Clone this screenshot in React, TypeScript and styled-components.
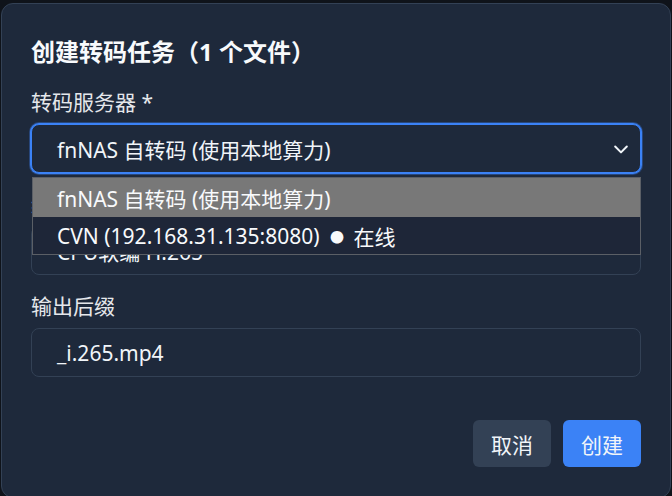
import React from "react";
import styled, { createGlobalStyle } from "styled-components";

const GlobalStyle = createGlobalStyle`
  html, body {
    margin: 0;
    padding: 0;
    background: #0f131a;
  }
  body {
    font-family: "Noto Sans", "Noto Sans CJK SC", sans-serif;
    color: #f1f5f9;
  }
  * { box-sizing: border-box; }
`;

const Dialog = styled.div`
  width: 670px;
  margin: 3px 1px 0 1px;
  padding: 30px 29px 30px 29px;
  background: #1e293b;
  border: 1px solid #334155;
  border-radius: 12px;
  display: flex;
  flex-direction: column;
`;

const Title = styled.h2`
  margin: 0 0 18px 0;
  font-size: 24px;
  line-height: 36px;
  font-weight: 700;
  color: #f8fafc;
  font-family: "Noto Sans", "Noto Sans CJK SC", sans-serif;
`;

const Form = styled.div`
  position: relative;
  display: flex;
  flex-direction: column;
`;

const Field = styled.div`
  display: flex;
  flex-direction: column;
  margin-bottom: 17px;
`;

const Label = styled.label`
  font-size: 21px;
  line-height: 29px;
  margin-bottom: 7px;
  color: #e5e7eb;
`;

const Box = styled.div<{ $focused?: boolean }>`
  height: 49px;
  display: flex;
  align-items: center;
  justify-content: space-between;
  padding: 0 9px 0 25px;
  background: #1e293b;
  border: 1px solid ${(p) => (p.$focused ? "#3b82f6" : "#334155")};
  border-radius: 8px;
  font-size: 21px;
  color: #f1f5f9;
  box-shadow: ${(p) =>
    p.$focused ? "0 0 0 1px #3b82f6, 0 0 0 2px rgba(59,130,246,0.35)" : "none"};
`;

const Chevron = styled.svg`
  width: 20px;
  height: 20px;
  flex: none;
`;

const Menu = styled.div`
  position: absolute;
  top: 89px;
  left: 1px;
  right: 0;
  background: #1e2638;
  border: 1px solid #5b5f66;
  z-index: 10;
  display: flex;
  flex-direction: column;
`;

const Option = styled.div<{ $active?: boolean }>`
  height: ${(p) => (p.$active ? 39 : 37)}px;
  display: flex;
  align-items: center;
  padding-left: 24px;
  font-size: 21px;
  color: #f8fafc;
  white-space: pre;
  background: ${(p) => (p.$active ? "#787878" : "#1e2638")};
`;

const Dot = styled.span`
  font-size: 14px;
  margin: 0 4px 0 5px;
`;

const Actions = styled.div`
  display: flex;
  justify-content: flex-end;
  gap: 12px;
  margin-top: 26px;
`;

const Button = styled.button<{ $primary?: boolean }>`
  height: 47px;
  width: 78px;
  border: none;
  border-radius: 6px;
  font-size: 21px;
  font-family: "Noto Sans", "Noto Sans CJK SC", sans-serif;
  color: #f1f5f9;
  background: ${(p) => (p.$primary ? "#3b82f6" : "#334155")};
  cursor: pointer;
`;

export default function App() {
  return (
    <>
      <GlobalStyle />
      <Dialog>
        <Title>创建转码任务（1 个文件）</Title>
        <Form>
          <Field>
            <Label>转码服务器 *</Label>
            <Box $focused>
              <span>fnNAS 自转码 (使用本地算力)</span>
              <Chevron viewBox="0 0 24 24" fill="none" stroke="#f1f5f9" strokeWidth="2.4" strokeLinecap="round" strokeLinejoin="round">
                <path d="M5 9l7 7 7-7" />
              </Chevron>
            </Box>
          </Field>
          <Field>
            <Label>编码方式</Label>
            <Box>
              <span>CPU软编 H.265</span>
            </Box>
          </Field>
          <Field>
            <Label>输出后缀</Label>
            <Box>
              <span>_i.265.mp4</span>
            </Box>
          </Field>
          <Menu>
            <Option $active>fnNAS 自转码 (使用本地算力)</Option>
            <Option>
              {"CVN (192.168.31.135:8080) "}<Dot>●</Dot>{" 在线"}
            </Option>
          </Menu>
        </Form>
        <Actions>
          <Button>取消</Button>
          <Button $primary>创建</Button>
        </Actions>
      </Dialog>
    </>
  );
}
